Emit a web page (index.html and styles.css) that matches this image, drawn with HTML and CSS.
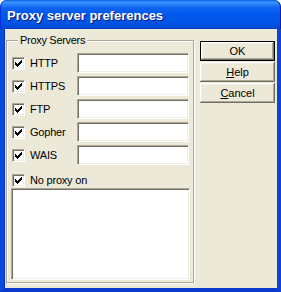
FILE: index.html
```html
<!DOCTYPE html>
<html>
<head>
<meta charset="utf-8">
<link rel="stylesheet" href="styles.css">
</head>
<body>
<div class="window">
  <div class="titlebar"><span class="title">Proxy server preferences</span></div>
  <div class="client">
    <fieldset class="group">
      <legend class="legend">Proxy Servers</legend>
      <div class="rows">
        <div class="row">
          <span class="check"><svg width="7" height="7" viewBox="0 0 7 7"><path d="M6 0h1v1h-1zM5 1h2v1h-2zM0 2h1v1h-1zM4 2h3v1h-3zM0 3h2v1h-2zM3 3h3v1h-3zM0 4h5v1h-5zM1 5h3v1h-3zM2 6h1v1h-1z" fill="#000"/></svg></span>
          <span class="label">HTTP</span>
          <span class="field"></span>
        </div>
        <div class="row">
          <span class="check"><svg width="7" height="7" viewBox="0 0 7 7"><path d="M6 0h1v1h-1zM5 1h2v1h-2zM0 2h1v1h-1zM4 2h3v1h-3zM0 3h2v1h-2zM3 3h3v1h-3zM0 4h5v1h-5zM1 5h3v1h-3zM2 6h1v1h-1z" fill="#000"/></svg></span>
          <span class="label">HTTPS</span>
          <span class="field"></span>
        </div>
        <div class="row">
          <span class="check"><svg width="7" height="7" viewBox="0 0 7 7"><path d="M6 0h1v1h-1zM5 1h2v1h-2zM0 2h1v1h-1zM4 2h3v1h-3zM0 3h2v1h-2zM3 3h3v1h-3zM0 4h5v1h-5zM1 5h3v1h-3zM2 6h1v1h-1z" fill="#000"/></svg></span>
          <span class="label">FTP</span>
          <span class="field"></span>
        </div>
        <div class="row">
          <span class="check"><svg width="7" height="7" viewBox="0 0 7 7"><path d="M6 0h1v1h-1zM5 1h2v1h-2zM0 2h1v1h-1zM4 2h3v1h-3zM0 3h2v1h-2zM3 3h3v1h-3zM0 4h5v1h-5zM1 5h3v1h-3zM2 6h1v1h-1z" fill="#000"/></svg></span>
          <span class="label">Gopher</span>
          <span class="field"></span>
        </div>
        <div class="row">
          <span class="check"><svg width="7" height="7" viewBox="0 0 7 7"><path d="M6 0h1v1h-1zM5 1h2v1h-2zM0 2h1v1h-1zM4 2h3v1h-3zM0 3h2v1h-2zM3 3h3v1h-3zM0 4h5v1h-5zM1 5h3v1h-3zM2 6h1v1h-1z" fill="#000"/></svg></span>
          <span class="label">WAIS</span>
          <span class="field"></span>
        </div>
      </div>
      <div class="row noproxy">
        <span class="check"><svg width="7" height="7" viewBox="0 0 7 7"><path d="M6 0h1v1h-1zM5 1h2v1h-2zM0 2h1v1h-1zM4 2h3v1h-3zM0 3h2v1h-2zM3 3h3v1h-3zM0 4h5v1h-5zM1 5h3v1h-3zM2 6h1v1h-1z" fill="#000"/></svg></span>
        <span class="label wide">No proxy on</span>
      </div>
      <div class="listbox"></div>
    </fieldset>
    <div class="buttons">
      <button class="btn default">OK</button>
      <button class="btn"><u>H</u>elp</button>
      <button class="btn"><u>C</u>ancel</button>
    </div>
  </div>
</div>
</body>
</html>
```

FILE: styles.css
```css
html, body {
  margin: 0;
  padding: 0;
  background: #ffffff;
}
body {
  font-family: "Liberation Sans", Arial, sans-serif;
  font-size: 11px;
  color: #000;
}
.window {
  width: 281px;
  height: 292px;
  display: flex;
  flex-direction: column;
}
.titlebar {
  height: 29px;
  flex: none;
  box-sizing: border-box;
  border-radius: 7px 7px 0 0;
  background: linear-gradient(to bottom, #0A5BE8 0px, #3D95FF 2px, #2A86FB 4px, #0E63F1 8px, #0058EC 14px, #0055E6 22px, #004DDA 27px, #0040C0 29px);
  box-shadow: inset 1px 0 0 #0831D9, inset -1px 0 0 #001EA0;
  display: flex;
  align-items: center;
  padding: 1px 0 0 7px;
}
.title {
  color: #fff;
  font-weight: bold;
  font-size: 13px;
  text-shadow: 1px 1px 0 #0A1883;
  white-space: nowrap;
}
.client {
  flex: 1;
  display: flex;
  align-items: flex-start;
  gap: 6px;
  background: #ECE9D8;
  border: 4px solid #0054E3;
  border-top: 0;
  padding: 5px 0 0 2px;
  box-shadow: inset 1px 0 0 #0831D9;
}
.window .client {
  border-left-color: #0A4BDB;
  border-right-color: #0A46D4;
  border-bottom-color: #0A3ACB;
}
.group {
  margin: 0;
  width: 188px;
  box-sizing: border-box;
  border: 1px solid #ACA899;
  box-shadow: inset 1px 1px 0 #fff, 1px 1px 0 #fff;
  padding: 6px 2px 2px 5px;
  min-inline-size: 0;
}
.legend {
  padding: 0 2px;
  margin-left: 6px;
  line-height: 13px;
  height: 13px;
  background: #ECE9D8;
  white-space: nowrap;
  letter-spacing: -0.3px;
}
.rows {
  display: flex;
  flex-direction: column;
  gap: 3px;
}
.row {
  display: flex;
  align-items: center;
  height: 20px;
}
.check {
  width: 13px;
  height: 13px;
  flex: none;
  box-sizing: border-box;
  background: #fff;
  border-top: 1px solid #ACA899;
  border-left: 1px solid #ACA899;
  border-right: 1px solid #fff;
  border-bottom: 1px solid #fff;
  box-shadow: inset 1px 1px 0 #716F64, inset -1px -1px 0 #F1EFE2;
  display: flex;
  align-items: flex-start;
  justify-content: flex-start;
  padding: 2px 0 0 2px;
}
.check svg {
  display: block;
  shape-rendering: crispEdges;
}
.label {
  width: 47px;
  margin-left: 5px;
  white-space: nowrap;
  line-height: 13px;
  letter-spacing: -0.2px;
}
.label.wide {
  width: auto;
}
.field {
  width: 112px;
  height: 20px;
  box-sizing: border-box;
  background: #fff;
  border-top: 1px solid #ACA899;
  border-left: 1px solid #ACA899;
  border-right: 1px solid #fff;
  border-bottom: 1px solid #fff;
  box-shadow: inset 1px 1px 0 #716F64, inset -1px -1px 0 #F1EFE2;
}
.noproxy {
  height: 13px;
  margin-top: 9px;
}
.listbox {
  margin: 1px 0 0 -1px;
  width: 179px;
  height: 92px;
  box-sizing: border-box;
  background: #fff;
  border-top: 1px solid #ACA899;
  border-left: 1px solid #ACA899;
  border-right: 1px solid #fff;
  border-bottom: 1px solid #fff;
  box-shadow: inset 1px 1px 0 #716F64, inset -1px -1px 0 #F1EFE2;
}
.buttons {
  margin-top: 7px;
  display: flex;
  flex-direction: column;
  gap: 1px;
}
.btn {
  width: 75px;
  height: 20px;
  margin: 0;
  padding: 0;
  box-sizing: border-box;
  font-family: "Liberation Sans", Arial, sans-serif;
  font-size: 11px;
  color: #000;
  background: #ECE9D8;
  border: 0;
  box-shadow: inset -1px -1px 0 #716F64, inset 1px 1px 0 #fff, inset -2px -2px 0 #ACA899, inset 2px 2px 0 #F1EFE2;
  line-height: 18px;
  text-align: center;
}
.btn.default {
  border: 1px solid #000;
}
.btn u {
  text-decoration: underline;
}
```
